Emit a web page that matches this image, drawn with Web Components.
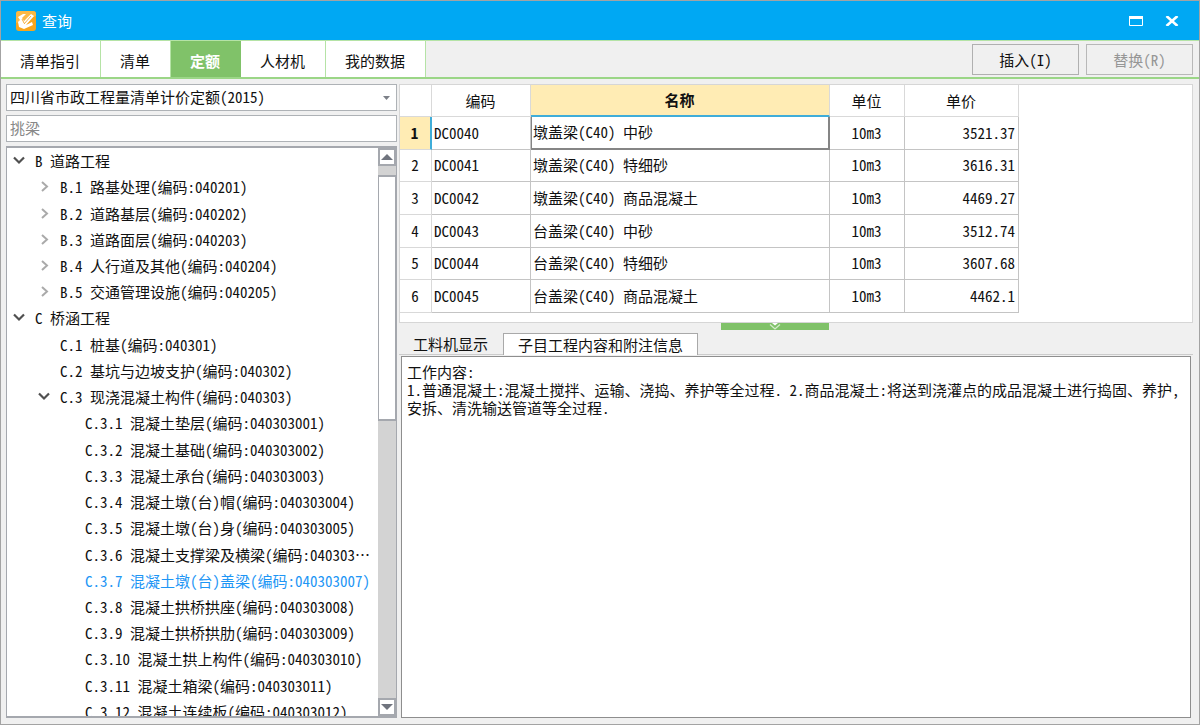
<!DOCTYPE html>
<html lang="zh-CN">
<head>
<meta charset="utf-8">
<title>查询</title>
<style>
html, body { margin: 0; height: 100%; }
body {
  font: 15px/18px "Noto Sans CJK SC", sans-serif;
  font-feature-settings: "hwid";
  color: #111;
  overflow: hidden;
}
</style>
</head>
<body>
<query-window></query-window>
<script>
const define = (name, html, setup) => {
  const template = document.createElement('template');
  template.innerHTML = html;
  customElements.define(name, class extends HTMLElement {
    connectedCallback() {
      if (this.shadowRoot) return;
      this.attachShadow({ mode: 'open' }).append(template.content.cloneNode(true));
      if (setup) setup(this, this.shadowRoot);
    }
  });
};

define('title-bar', `
<style>
:host { display: flex; align-items: center; height: 39px; padding: 0 17px 0 13px; background: #00a8f3; color: #fff; flex: none; }
.logo { width: 22px; height: 22px; margin-right: 6px; }
h1 { font: inherit; margin: 0; flex: 1; }
button { border: 0; background: none; padding: 0; width: 20px; height: 20px; margin-left: 16px; display: grid; place-items: center; color: inherit; }
</style>
<svg class="logo" viewBox="0 0 22 22" aria-hidden="true">
  <rect x="2" y="1" width="20" height="20" rx="3" fill="#f7a51c"/>
  <path d="M2 13l20-7V4a3 3 0 0 0-3-3H5a3 3 0 0 0-3 3z" fill="#fbb945"/>
  <path d="M4 7l5-3 3 0-4 4 2 3 7-7 3 2-8 9 6-3 1 3L10 19l-5-2-1-5 2-2z" fill="#fff"/>
  <path d="M10 14l7-8M8 9l2 4" fill="none" stroke="#f5b040" stroke-width="1"/>
</svg>
<h1>查询</h1>
<button type="button" aria-label="最大化"><svg width="14" height="10" viewBox="0 0 14 10"><path d="M.5 .5h13v9H.5z" fill="none" stroke="currentColor"/><path d="M0 0h14v3H0z" fill="currentColor"/></svg></button>
<button type="button" aria-label="关闭"><svg width="14" height="10" viewBox="0 0 14 10"><path d="M1.500 0L12.500 10M12.500 0L1.500 10" stroke="currentColor" stroke-width="2.600"/></svg></button>
`);

define('tab-button', `
<style>
:host { display: block; border-right: 1px solid #b5e3a6; background: #fff; }
button { font: inherit; font-feature-settings: inherit; color: inherit; background: none; border: 0; height: 100%; padding: 3px 20px 0 19px; display: block; }
:host([selected]) { background: #80c269; border-color: #80c269; color: #fff; font-weight: bold; }
</style>
<button type="button" role="tab"><slot></slot></button>
`, (host, root) => root.querySelector('button').setAttribute('aria-selected', host.hasAttribute('selected')));

define('tool-button', `
<style>
:host { display: block; width: 107px; height: 31px; }
button { font: inherit; font-feature-settings: inherit; width: 100%; height: 100%; padding: 0; background: #f0f0f0; border: 1px solid #b0b0b0; color: #111; }
button:disabled { color: #969696; border-color: #b8b8b8; }
</style>
<button type="button"><slot></slot></button>
`, (host, root) => { root.querySelector('button').disabled = host.hasAttribute('disabled'); });

define('main-tabs', `
<style>
:host { display: flex; height: 36px; border-top: 1px solid #b5e3a6; border-bottom: 2px solid #9bd687; flex: none; }
nav { display: flex; flex: 1; }
.tools { display: flex; gap: 7px; padding: 3px 6px 0 0; }
</style>
<nav role="tablist" aria-label="数据来源">
  <tab-button>清单指引</tab-button><tab-button>清单</tab-button><tab-button selected>定额</tab-button><tab-button>人材机</tab-button><tab-button>我的数据</tab-button>
</nav>
<div class="tools"><tool-button>插入(I)</tool-button><tool-button disabled>替换(R)</tool-button></div>
`);

define('library-filter', `
<style>
:host { display: grid; gap: 4px; flex: none; }
label { display: block; position: relative; }
select, input { font: inherit; font-feature-settings: inherit; display: block; box-sizing: border-box; width: 100%; height: 27px; padding: 0 3px 2px; margin: 0; border: 1px solid #aeb2b6; border-radius: 0; background: #fff; color: #111; appearance: none; outline: 0; }
input::placeholder { color: #888; opacity: 1; }
svg { position: absolute; right: 7px; top: 12px; pointer-events: none; }
</style>
<label><select aria-label="定额库"><option>四川省市政工程量清单计价定额(2015)</option></select>
<svg width="7" height="4" viewBox="0 0 7 4"><path d="M0 0h7L3.500 4z" fill="#7c8088"/></svg></label>
<input type="text" aria-label="搜索" placeholder="挑梁">
`);

define('tree-item', `
<style>
:host { display: flex; align-items: center; white-space: nowrap; min-height: 0; padding-left: calc(var(--level, 0) * 25px + 4px); }
:host([selected]) { color: #1e96f5; }
button { border: 0; padding: 0; background: none; width: 16px; height: 16px; margin-right: 8px; display: grid; place-items: center; flex: none; }
button svg { display: none; }
:host([open]) .down, :host([closed]) .right { display: block; }
:host(:not([open]):not([closed])) button { visibility: hidden; }
</style>
<button type="button" aria-label="展开或折叠">
  <svg class="down" width="14" height="16" viewBox="0 0 14 16"><path d="M2 4.500l5 5 5-5" fill="none" stroke="#505050" stroke-width="2.200"/></svg>
  <svg class="right" width="14" height="16" viewBox="0 0 14 16"><path d="M5 3l5 4.500-5 4.500" fill="none" stroke="#aaa" stroke-width="2"/></svg>
</button>
<span><slot></slot></span>
`, host => {
  host.setAttribute('role', 'treeitem');
  host.style.setProperty('--level', host.getAttribute('level'));
});

define('scroll-rail', `
<style>
:host { display: flex; flex-direction: column; width: 18px; background: #d3d3d3; flex: none; }
button { padding: 0; height: 18px; box-sizing: border-box; border: 2px solid #a5a8ae; background: #fff; display: grid; place-items: center; flex: none; }
.track { flex: 1; padding-top: 9px; }
.thumb { height: 242px; background: #fff; border: solid #a5a8ae; border-width: 2px 1px; }
</style>
<button type="button" aria-label="向上滚动"><svg width="12" height="6" viewBox="0 0 12 6"><path d="M0 6h12L6 0z" fill="#70747e"/></svg></button>
<div class="track"><div class="thumb"></div></div>
<button type="button" aria-label="向下滚动"><svg width="12" height="6" viewBox="0 0 12 6"><path d="M0 0h12L6 6z" fill="#70747e"/></svg></button>
`);

define('chapter-tree', `
<style>
:host { display: flex; flex: 1; min-height: 0; border: solid #a5a8ae; border-width: 2px 1px; background: #fff; overflow: hidden; }
.rows { flex: 1; min-width: 0; height: 577px; display: grid; grid-auto-rows: 1fr; overflow: hidden; }
</style>
<div class="rows" role="tree" aria-label="章节"></div>
<scroll-rail></scroll-rail>
`, (host, root) => {
  const rows = [
    [0, 'B 道路工程', 'open'],
    [1, 'B.1 路基处理(编码:040201)', 'closed'],
    [1, 'B.2 道路基层(编码:040202)', 'closed'],
    [1, 'B.3 道路面层(编码:040203)', 'closed'],
    [1, 'B.4 人行道及其他(编码:040204)', 'closed'],
    [1, 'B.5 交通管理设施(编码:040205)', 'closed'],
    [0, 'C 桥涵工程', 'open'],
    [1, 'C.1 桩基(编码:040301)'],
    [1, 'C.2 基坑与边坡支护(编码:040302)'],
    [1, 'C.3 现浇混凝土构件(编码:040303)', 'open'],
    [2, 'C.3.1 混凝土垫层(编码:040303001)'],
    [2, 'C.3.2 混凝土基础(编码:040303002)'],
    [2, 'C.3.3 混凝土承台(编码:040303003)'],
    [2, 'C.3.4 混凝土墩(台)帽(编码:040303004)'],
    [2, 'C.3.5 混凝土墩(台)身(编码:040303005)'],
    [2, 'C.3.6 混凝土支撑梁及横梁(编码:040303…'],
    [2, 'C.3.7 混凝土墩(台)盖梁(编码:040303007)', 'selected'],
    [2, 'C.3.8 混凝土拱桥拱座(编码:040303008)'],
    [2, 'C.3.9 混凝土拱桥拱肋(编码:040303009)'],
    [2, 'C.3.10 混凝土拱上构件(编码:040303010)'],
    [2, 'C.3.11 混凝土箱梁(编码:040303011)'],
    [2, 'C.3.12 混凝土连续板(编码:040303012)']
  ];
  root.querySelector('.rows').append(...rows.map(([level, text, state]) => {
    const item = document.createElement('tree-item');
    item.setAttribute('level', level);
    if (state) item.setAttribute(state, '');
    item.textContent = text;
    return item;
  }));
});

define('quota-grid', `
<style>
:host { display: block; height: 237px; border: 1px solid #d6d6d6; background: #fff; flex: none; overflow: hidden; }
table { border-collapse: separate; border-spacing: 0; table-layout: fixed; width: 619px; height: 228px; }
thead tr { height: 32px; }
tbody tr { height: 32px; }
th, td { box-sizing: border-box; padding: 0 3px 0 2px; border: solid #c4c4c4; border-width: 0 1px 1px 0; font-weight: normal; text-align: center; white-space: nowrap; }
thead th, tbody th { border-color: #d9d9d9; }
.code, .name { text-align: left; }
.price { text-align: right; }
thead .name, thead .code, thead .price { text-align: center; }
thead .name { background: #ffecb4; font-weight: bold; border-bottom: 2px solid #3fadd9; }
tbody tr:first-child th { background: #ffecb4; font-weight: bold; border-right: 2px solid #3fadd9; }
tbody tr:first-child .name { border: solid #858585; border-width: 0 2px 2px 1px; padding-left: 1px; }
</style>
<table>
<colgroup><col style="width:32px"><col style="width:99px"><col style="width:299px"><col style="width:75px"><col style="width:114px"></colgroup>
<thead><tr><th></th><th class="code">编码</th><th class="name">名称</th><th>单位</th><th class="price">单价</th></tr></thead>
<tbody></tbody>
</table>
`, (host, root) => {
  const body = root.querySelector('tbody');
  [
    ['DC0040', '墩盖梁(C40) 中砂', '3521.37'],
    ['DC0041', '墩盖梁(C40) 特细砂', '3616.31'],
    ['DC0042', '墩盖梁(C40) 商品混凝土', '4469.27'],
    ['DC0043', '台盖梁(C40) 中砂', '3512.74'],
    ['DC0044', '台盖梁(C40) 特细砂', '3607.68'],
    ['DC0045', '台盖梁(C40) 商品混凝土', '4462.1']
  ].forEach(([code, name, price], i) => {
    body.insertAdjacentHTML('beforeend',
      `<tr><th scope="row">${i + 1}</th><td class="code">${code}</td><td class="name">${name}</td><td>10m3</td><td class="price">${price}</td></tr>`);
  });
});

define('split-handle', `
<style>
:host { display: flex; justify-content: center; padding-right: 42px; height: 10px; flex: none; }
button { width: 108px; height: 7px; padding: 0; border: 0; background: #80c269; display: grid; place-items: center; }
</style>
<button type="button" aria-label="收起"><svg width="14" height="7" viewBox="0 0 14 7"><path d="M4 0h6L7 2.500z" fill="#fff"/><path d="M2 1.500l5 4.500 5-4.500" fill="none" stroke="#d5edcc" stroke-width="1.300"/></svg></button>
`);

define('detail-pane', `
<style>
:host { display: flex; flex-direction: column; flex: 1; min-height: 0; }
.tabs { display: flex; height: 21px; border-bottom: 1px solid #ccc; }
button { font: inherit; font-feature-settings: inherit; color: inherit; padding: 0 15px 0 14px; border: 0; background: none; }
button[aria-selected=true] { background: #fff; border: solid #a9a9a9; border-width: 1px 1px 0; padding: 0 14px; margin-bottom: -1px; }
textarea { font: inherit; font-feature-settings: inherit; color: inherit; box-sizing: border-box; flex: 1; min-height: 0; margin: 1px 2px 0; padding: 6px 3px 6px 5px; border: 1px solid #8e8e8e; border-radius: 0; background: #fff; resize: none; outline: 0; overflow: hidden; }
</style>
<div class="tabs" role="tablist"><button type="button" role="tab" aria-selected="false">工料机显示</button><button type="button" role="tab" aria-selected="true">子目工程内容和附注信息</button></div>
<textarea readonly aria-label="子目工程内容和附注信息">工作内容:
1.普通混凝土:混凝土搅拌、运输、浇捣、养护等全过程. 2.商品混凝土:将送到浇灌点的成品混凝土进行捣固、养护,安拆、清洗输送管道等全过程.</textarea>
`);

define('query-window', `
<style>
:host { display: flex; flex-direction: column; box-sizing: border-box; height: 100vh; border: 1px solid #a3a3a3; background: #f0f0f0; }
main { flex: 1; min-height: 0; display: flex; gap: 2px; padding: 5px 6px 6px 5px; }
aside { width: 391px; display: flex; flex-direction: column; gap: 4px; flex: none; }
section { flex: 1; min-width: 0; display: flex; flex-direction: column; }
</style>
<title-bar></title-bar>
<main-tabs></main-tabs>
<main>
  <aside><library-filter></library-filter><chapter-tree></chapter-tree></aside>
  <section><quota-grid></quota-grid><split-handle></split-handle><detail-pane></detail-pane></section>
</main>
`);
</script>
</body>
</html>
